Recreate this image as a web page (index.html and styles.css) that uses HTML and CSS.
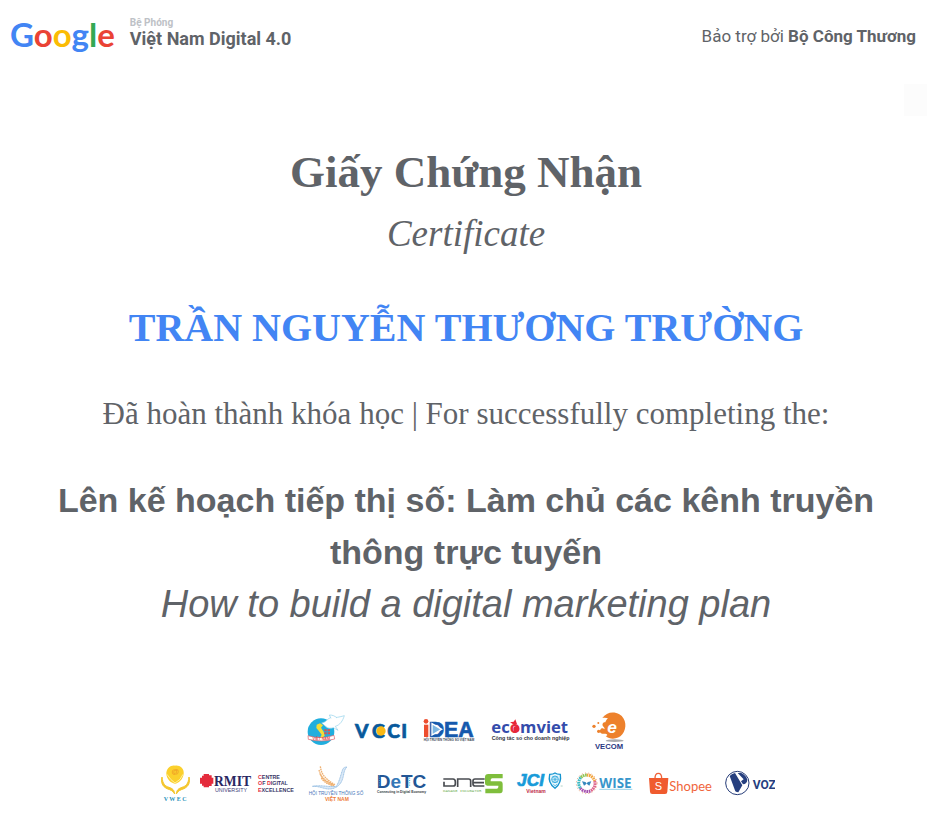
FILE: index.html
```html
<!DOCTYPE html>
<html lang="vi">
<head>
<meta charset="utf-8">
<meta name="viewport" content="width=device-width, initial-scale=1">
<title>Giấy Chứng Nhận</title>
<link rel="stylesheet" href="styles.css">
</head>
<body>
<header class="header">
  <div class="brand">
    <div class="google" aria-label="Google"><span class="blue">G</span><span class="red">o</span><span class="yellow">o</span><span class="blue">g</span><span class="green">l</span><span class="red">e</span></div>
    <div class="program">
      <span class="program-kicker">Bệ Phóng</span>
      <span class="program-name">Việt Nam Digital 4.0</span>
    </div>
  </div>
  <p class="sponsor">Bảo trợ bởi <strong>Bộ Công Thương</strong></p>
</header>

<div class="side-tab"></div>

<main class="certificate">
  <h1 class="title">Giấy Chứng Nhận</h1>
  <p class="subtitle">Certificate</p>
  <p class="recipient">TRẦN NGUYỄN THƯƠNG TRƯỜNG</p>
  <p class="statement">Đã hoàn thành khóa học | For successfully completing the:</p>
  <h2 class="course">Lên kế hoạch tiếp thị số: Làm chủ các kênh truyền thông trực tuyến</h2>
  <p class="course-en">How to build a digital marketing plan</p>
</main>

<footer class="partners">
  <div class="row">
    <svg width="43" height="46" viewBox="9 15 129 138">
      <circle cx="63" cy="83" r="40" fill="#20aede"/>
      <path d="M50 62l10-4 9 6-6 7 8 12 3 12-9 8-5-2 5-9-9-12-7-8z" fill="#f3dc38"/>
      <path d="M65 57c13-1 18-15 29-17 13 2 25-1 39-5-5 16-13 28-27 32l8 12-14-8c-8 3-17 2-22-3L65 57z" fill="#fff" stroke="#8fd0ea" stroke-width="2"/>
      <path d="M93 43l-5-10c10 0 17 3 23 9" fill="#fff" stroke="#8fd0ea" stroke-width="2"/>
      <path d="M24 95q40 12 78-1l2 11q-38 11-79 1z" fill="#fff" stroke="#df5960" stroke-width="2"/>
      <text x="64" y="107" class="mark tiny" fill="#df4f50" text-anchor="middle">VIỆT NAM</text>
      <path d="M73 76h7v6h-7zM83 76h7v6h-7zM73 85h7v6h-7zM83 85h7v6h-7z" fill="#df4f50"/>
    </svg>
    <svg width="57" height="46" viewBox="162 15 171 138">
      <text x="165" y="102" class="mark vcci">V</text>
      <text x="216" y="102" class="mark vcci">C</text>
      <text x="262" y="102" class="mark vcci">C</text>
      <text x="304" y="102" class="mark vcci">I</text>
      <circle cx="243" cy="81" r="14" fill="#f9b814"/>
    </svg>
    <svg width="60" height="46" viewBox="357 15 180 138">
      <path d="M372 62h13v37h-13z" fill="#ed4d2e"/><circle cx="378" cy="52" r="7" fill="#ed4d2e"/>
      <text x="386" y="99" class="mark idea" fill="#1559ad">DEA</text>
      <path d="M396 59l29 17-29 17z" fill="#7cb6e2" stroke="#fff" stroke-width="4"/>
      <text x="371" y="112" class="mark micro" fill="#3c4654">HỘI TRUYỀN THÔNG SỐ VIỆT NAM</text>
    </svg>
    <svg width="88" height="46" viewBox="21 15 264 138">
      <text x="34" y="87" class="mark ecom" fill="#344cab">ec<tspan fill="#e52c3c">o</tspan>mviet</text>
      <circle cx="109" cy="75" r="9" fill="#e82639"/>
      <path d="M102 62l-12-7 11-2 5-7 5 14z" fill="#e82639"/>
      <text x="35" y="109" class="mark ecom-sub" fill="#30323b">Công tác số cho doanh nghiệp</text>
    </svg>
    <svg width="48" height="46" viewBox="309 15 144 138">
      <path d="M367 42c11-17 34-22 51-11 22 13 23 43 9 60-12 15-36 18-50 5 10-2 3-8-5-7-9 1-16-5-11-12 3-5 9-5 12-1 2-3-1-6-4-9-4-7 1-13 7-12 2-6 4-9 8-12-5-2-11-2-17-1z" fill="#ed812c"/>
      <text x="382" y="87" class="mark vecom-e" fill="#fff">e</text>
      <circle cx="342" cy="67" r="5" fill="#ed812c"/><circle cx="356" cy="82" r="5" fill="#ed812c"/><circle cx="355" cy="57" r="3" fill="#ed812c"/>
      <ellipse cx="404" cy="110" rx="27" ry="4" fill="#a8a9ad"/>
      <text x="345" y="136" class="mark vecom" fill="#28367f">VECOM</text>
    </svg>
  </div>
  <div class="row">
    <svg width="32" height="42" viewBox="12 6 96 126">
      <path d="M60 20c12-3 29 8 26 25-2 17-16 28-26 29-13-2-25-14-26-29-1-17 15-28 26-25z" fill="#fbd02c"/>
      <path d="M36 46q11 18 24 26 18-9 24-26" fill="none" stroke="#fff0a0" stroke-width="3"/>
      <text x="61" y="45" class="mark vwec-at" fill="#ee9824" text-anchor="middle">@</text>
      <path d="M21 54c2 21 9 27 21 31 12 4 16 9 17 20-5-10-12-12-23-16-14-7-19-18-15-35zM102 54c-2 21-9 27-21 31-12 4-16 9-17 20 5-10 12-12 23-16 14-7 19-18 15-35z" fill="#f4c62c" stroke="#f4c62c" stroke-width="3"/>
      <text x="26" y="125" class="mark vwec" fill="#2992ba">V W E C</text>
    </svg>
    <svg width="98" height="42" viewBox="132 6 294 126">
      <path d="M146 50v-5h16v4h8v7h5v18h-5v7h-8v4h-16v-5h-5v-6h-6V56h6v-6z" fill="#e42b3c"/>
      <text x="177" y="80" class="mark rmit" fill="#292762">RMIT</text>
      <text x="180" y="99" class="mark rmit-sub" fill="#414079">UNIVERSITY</text>
      <text x="309" y="59" class="mark code" fill="#393767"><tspan fill="#e42b3c">C</tspan>ENTRE</text>
      <text x="309" y="79" class="mark code" fill="#393767"><tspan fill="#e42b3c">O</tspan>F <tspan fill="#e42b3c">D</tspan>IGITAL</text>
      <text x="309" y="98" class="mark code" fill="#393767"><tspan fill="#e42b3c">E</tspan>XCELLENCE</text>
    </svg>
    <svg width="62" height="42" viewBox="15 6 186 126">
      <path d="M61 22c3 25 15 38 44 55M57 33c5 21 19 34 45 45M60 45c8 17 22 27 43 35M64 57c7 12 21 20 38 24" fill="none" stroke="#efb070" stroke-width="4" stroke-dasharray="5 2"/>
      <path d="M37 82c28-5 49 3 72 0 8-13 11-26 18-48 2-7 6-10 14-10-10 8-9 25-14 38-5 14-16 26-37 28-18 1-30-9-53-8z" fill="#dbe9f7" stroke="#7caddb" stroke-width="2" stroke-dasharray="4 1"/>
      <text x="26" y="109" class="mark truyen" fill="#4776b9">HỘI TRUYỀN THÔNG SỐ</text>
      <text x="75" y="126" class="mark truyen-vn" fill="#ee7c37">VIỆT NAM</text>
    </svg>
    <svg width="55" height="42" viewBox="225 6 165 126">
      <text x="230" y="86" class="mark detc" fill="#235695">D<tspan fill="#3477b6">e</tspan>TC</text>
      <path d="M238 49v35M329 56v28" stroke="#45a5d6" stroke-width="3" stroke-dasharray="3 4"/>
      <text x="231" y="103" class="mark detc-sub" fill="#303844">Connecting in Digital Economy</text>
    </svg>
    <svg width="67" height="42" viewBox="9 6 201 126">
      <path d="M25 60h29q7 0 7 8v6q0 7-7 7H27V68M68 84V60h33q6 0 6 6v18M149 60h-29q-6 0-6 6v9q0 6 6 6h28M116 71h31" fill="none" stroke="#484b50" stroke-width="5"/>
      <path d="M160 45h43v13h-31q-5 0-5 5v4h29q7 0 7 7v20q0 9-8 9h-44V89h34q5 0 5-5v-4h-33q-7 0-7-7V54q0-9 10-9z" fill="#7fbe3c"/>
      <text x="24" y="98" class="mark dnes-sub" fill="#78b361">DANANG INCUBATOR</text>
    </svg>
    <svg width="54" height="42" viewBox="234 6 162 126">
      <text x="246" y="82" class="mark jci" fill="#189bd9">JCI</text>
      <path d="M360 42c5 4 10 4 16 4 3 17-2 31-16 42-15-11-20-25-16-42 6 0 11 0 16-4z" fill="#e4f5fc" stroke="#1594cf" stroke-width="4"/>
      <circle cx="360" cy="61" r="10" fill="none" stroke="#3fafdf" stroke-width="3"/><path d="M350 61h20M360 51v20M353 53c7 5 7 12 0 17M367 53c-7 5-7 12 0 17M355 75l5 6 6-6" fill="none" stroke="#3fafdf" stroke-width="2"/>
      <path d="M377 81h6" stroke="#8ba" stroke-width="2"/>
      <text x="274" y="102" class="mark jci-sub" fill="#bd2746">Vietnam</text>
    </svg>
    <svg width="60" height="42" viewBox="15 6 180 126">
      <g fill="none" stroke-width="9" stroke-dasharray="5 2">
        <path d="M50 48a25 25 0 0 1 24 18" stroke="#f2a43c"/><path d="M74 66a25 25 0 0 1-13 30" stroke="#dd668d"/><path d="M61 96a25 25 0 0 1-30-9" stroke="#a450ae"/><path d="M31 87a25 25 0 0 1 2-32" stroke="#3cb8c1"/><path d="M33 55a25 25 0 0 1 17-7" stroke="#8dc353"/>
      </g>
      <circle cx="50" cy="73" r="31" fill="none" stroke="#e99b74" stroke-width="3" stroke-dasharray="3 7"/>
      <path d="M36 67l10 2 4 4 4-4 10-2-6 13-6-4-2-3-2 3-6 4z" fill="#3588bd"/>
      <text x="88" y="86" class="mark wise" fill="#3796cb">WISE</text>
      <path d="M88 91h99" stroke="#64b9dc" stroke-width="2"/>
    </svg>
    <svg width="72" height="42" viewBox="219 6 216 126">
      <path d="M255 58c0-20 20-20 20 0" fill="none" stroke="#f06138" stroke-width="4"/>
      <path d="M237 57h58l-3 41q0 7-7 7h-38q-7 0-7-7z" fill="#f05b2e"/>
      <text x="254" y="94" class="mark shopee-s" fill="#fff">S</text>
      <text x="298" y="97" class="mark shopee" fill="#f0653b">Shopee</text>
    </svg>
    <svg width="52" height="42" viewBox="459 6 156 126">
      <circle cx="502" cy="72" r="35" fill="#fff" stroke="#263c78" stroke-width="3"/>
      <path d="M479 51q7-8 16-9l22 37-12 21q-5 0-9-3zM503 42h11q14 7 18 20-1 13-13 14l-6-9 8-6z" fill="#263f7f"/>
      <text x="548" y="89" class="mark voz" fill="#263f7f">VOZ</text>
    </svg>
  </div>
</footer>
</body>
</html>
```

FILE: styles.css
```css
* { box-sizing: border-box; }
body {
  margin: 0;
  min-height: 100vh;
  background: #fff;
  color: #5f6368;
  position: relative;
  overflow-x: hidden;
}
h1, h2, p { margin: 0; }

.header {
  display: flex;
  justify-content: space-between;
  align-items: flex-start;
  padding: 12px 11px 0 10px;
  font-family: Roboto, "Liberation Sans", sans-serif;
}
.brand { display: flex; gap: 15px; }
.google { font: 700 33px/44px Lato, sans-serif; }
.blue { color: #4285f4; }
.red { color: #ea4335; }
.yellow { color: #fbbc05; }
.green { color: #34a853; }
.program { display: flex; flex-direction: column; padding-top: 5px; }
.program-kicker { font-size: 10px; line-height: 12px; font-weight: 700; color: #bdc1c6; }
.program-name { font-size: 18px; line-height: 20px; font-weight: 700; }
.sponsor { font-size: 17px; line-height: 24px; padding-top: 12px; }
.sponsor strong { font-weight: 700; }

.side-tab {
  position: absolute;
  top: 84px;
  right: 0;
  width: 23px;
  height: 32px;
  background: #fcfcfc;
}

.certificate {
  padding: 88px 40px 0 45px;
  text-align: center;
  font-family: "Liberation Serif", serif;
}
.title { font-size: 45px; line-height: 56px; }
.subtitle { font-size: 37px; line-height: 44px; font-style: italic; padding-top: 12px; }
.recipient { font-size: 40px; line-height: 48px; font-weight: 700; color: #4285f4; padding-top: 48px; }
.statement { font-size: 31px; line-height: 40px; padding-top: 42px; }
.course { font: 700 34px/52px "Liberation Sans", sans-serif; padding-top: 40px; }
.course-en { font: italic 38px/52px "Liberation Sans", sans-serif; }

.partners { padding: 79px 0 0 7px; }
.row { display: flex; justify-content: center; gap: 8px; }
.row + .row { padding-top: 6px; }
.row svg { flex: none; }

.mark { font-family: "Liberation Sans", sans-serif; font-weight: 700; }
.tiny { font-size: 11px; }
.micro { font-size: 9px; }
.vcci { font: 900 58px Lato, sans-serif; fill: #07599c; stroke: #07599c; stroke-width: 2px; }
.idea { font-size: 64px; stroke: #1559ad; stroke-width: 2px; }
.ecom { font: 700 50px "Open Sans", sans-serif; }
.ecom-sub { font-size: 16px; }
.vecom-e { font-size: 52px; font-style: italic; }
.vecom { font-size: 23px; }
.vwec-at { font-size: 23px; }
.vwec { font: 700 18px "Liberation Serif", serif; }
.rmit { font: 700 41px "Liberation Serif", serif; }
.rmit-sub { font-size: 16px; font-weight: 400; }
.code { font-size: 16px; }
.truyen { font-size: 14px; font-weight: 400; }
.truyen-vn { font-size: 15px; }
.detc { font-size: 57px; }
.detc-sub { font-size: 10px; }
.dnes-sub { font: 400 12px "Liberation Mono", monospace; }
.jci { font-size: 52px; font-style: italic; stroke: #189bd9; stroke-width: 2px; }
.jci-sub { font-size: 15px; }
.wise { font: 700 40px "Open Sans", sans-serif; }
.shopee-s { font-size: 33px; font-weight: 400; }
.shopee { font: 400 39px Lato, sans-serif; }
.voz { font: 700 36px "Liberation Sans Narrow", Roboto, sans-serif; }
```
